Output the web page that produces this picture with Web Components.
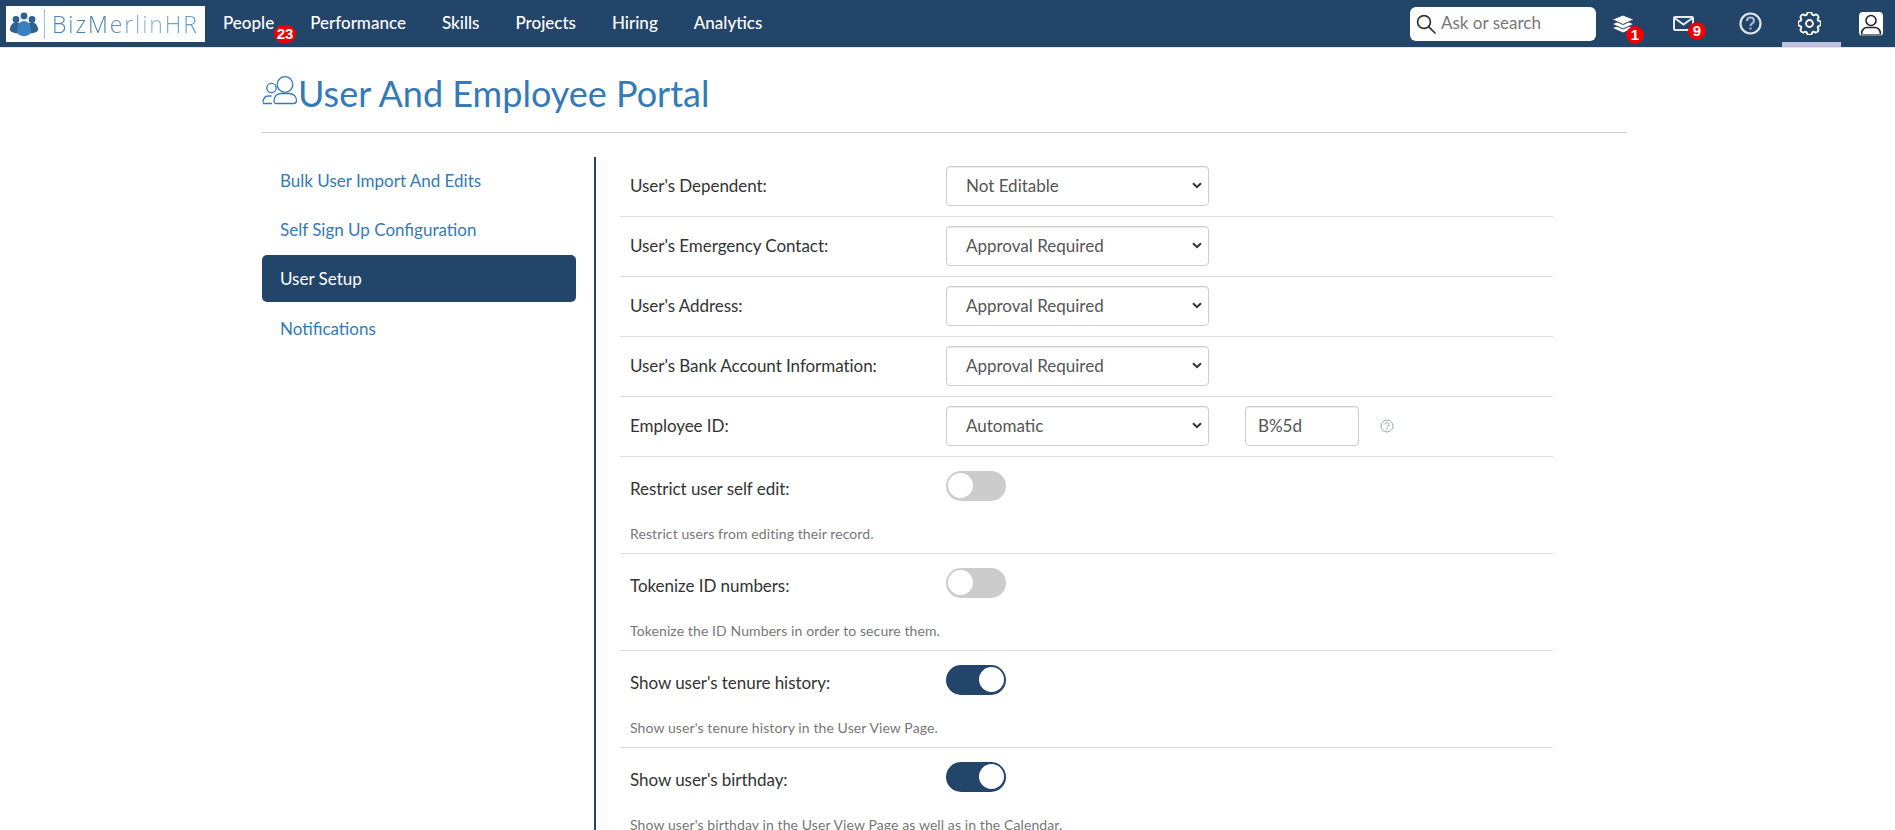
<!DOCTYPE html>
<html><head><meta charset="utf-8"><title>User And Employee Portal</title>
<style>
html,body{margin:0;padding:0;height:830px;overflow:hidden;background:#fff;font-family:Lato,"Liberation Sans",sans-serif;color:#333}
</style></head><body>
<app-header></app-header>
<portal-page>
  <page-title slot="title">User And Employee Portal</page-title>
  <side-nav slot="nav"></side-nav>
  <select-row label="User's Dependent:" value="Not Editable"></select-row>
  <select-row label="User's Emergency Contact:" value="Approval Required"></select-row>
  <select-row label="User's Address:" value="Approval Required"></select-row>
  <select-row label="User's Bank Account Information:" value="Approval Required"></select-row>
  <select-row label="Employee ID:" value="Automatic" extra="B%5d"></select-row>
  <toggle-row label="Restrict user self edit:" note="Restrict users from editing their record."></toggle-row>
  <toggle-row label="Tokenize ID numbers:" note="Tokenize the ID Numbers in order to secure them."></toggle-row>
  <toggle-row on label="Show user's tenure history:" note="Show user's tenure history in the User View Page."></toggle-row>
  <toggle-row on label="Show user's birthday:" note="Show user's birthday in the User View Page as well as in the Calendar."></toggle-row>
</portal-page>
<script>
const NAVY='#23456a';
function def(name,html,init){
  customElements.define(name,class extends HTMLElement{
    constructor(){super();this.attachShadow({mode:'open'}).innerHTML=html;}
    connectedCallback(){if(init)init(this,this.shadowRoot);}
  });
}
const gear='M9.796 1.343c-.527-1.79-3.065-1.79-3.592 0l-.094.319a.873.873 0 0 1-1.255.52l-.292-.16c-1.64-.892-3.433.902-2.54 2.541l.159.292a.873.873 0 0 1-.52 1.255l-.319.094c-1.79.527-1.79 3.065 0 3.592l.319.094a.873.873 0 0 1 .52 1.255l-.16.292c-.892 1.64.901 3.434 2.541 2.54l.292-.159a.873.873 0 0 1 1.255.52l.094.319c.527 1.79 3.065 1.79 3.592 0l.094-.319a.873.873 0 0 1 1.255-.52l.292.16c1.64.893 3.434-.902 2.54-2.541l-.159-.292a.873.873 0 0 1 .52-1.255l.319-.094c1.79-.527 1.79-3.065 0-3.592l-.319-.094a.873.873 0 0 1-.52-1.255l.16-.292c.893-1.64-.902-3.433-2.541-2.54l-.292.159a.873.873 0 0 1-1.255-.52l-.094-.319z';

def('red-badge',`<style>:host{position:absolute;display:flex;align-items:center;justify-content:center;background:#f00000;color:#fff;border-radius:9px;height:18px;min-width:18px;font:700 15px "Liberation Sans",Arial,sans-serif;padding:0 1px;box-sizing:border-box;line-height:18px}</style><slot></slot>`);

def('nav-link',`<style>:host{display:block;position:relative;color:#fff;font:500 17px Lato,sans-serif;line-height:45px;height:47px;white-space:nowrap}</style><slot></slot>`);

def('icon-cell',`<style>:host{display:flex;align-items:center;justify-content:center;position:relative;height:47px;box-sizing:border-box;flex:none}
:host([active])::after{content:"";position:absolute;left:0;right:0;bottom:0;height:5px;background:#c0c0e2}</style><slot></slot>`);

def('search-box',`<style>:host{display:flex;align-items:center;width:186px;height:34px;background:#fff;border-radius:6px;box-sizing:border-box;padding-left:6px;gap:5px;flex:none}
span{font:17px Lato,sans-serif;color:#777;white-space:nowrap;padding-bottom:3px}</style>
<svg width="20" height="20" viewBox="0 0 20 20" fill="none" stroke="#333" stroke-width="1.7"><circle cx="8" cy="8" r="6.4"/><path d="M12.8 12.8 19 19" stroke-linecap="round"/></svg><span>Ask or search</span>`);

def('app-header',`<style>
:host{display:flex;align-items:center;height:47px;background:${NAVY};box-shadow:0 1px 0 #e3e7ec}
.logo{display:flex;align-items:center;flex:none;width:199px;height:36px;margin-left:6px;background:#fff;box-sizing:border-box;padding-left:4px}
.word{font:300 23px "Open Sans",sans-serif;letter-spacing:1.9px;white-space:nowrap;background:linear-gradient(90deg,#4d86b5,#3f78aa 35%,#8fb3d1 62%,#5a94c4);-webkit-background-clip:text;background-clip:text;color:transparent}
.sep{width:1px;height:30px;background:#9cc0dc;margin:0 7px 0 6px;flex:none}
nav{display:flex;gap:36px;margin-left:18px}
.right{display:flex;align-items:center;margin-left:auto}
</style>
<div class="logo">
<svg width="28" height="24" viewBox="0 0 28 24" style="flex:none">
<g fill="#2e618f"><circle cx="6" cy="7.500" r="3.400"/><circle cx="22" cy="7.500" r="3.400"/><path d="M0 18c0-5 2.500-7.500 6-7.500 1.500 0 3 .4 4 1.500v9.500C5 21.500 0 20 0 18zM28 18c0-5-2.500-7.500-6-7.500-1.500 0-3 .4-4 1.500v9.500c5 0 10-1.500 10-3.500z"/><circle cx="14" cy="4" r="3.400"/></g>
<path d="M7 19c0-6 2.500-10 7-10s7 4 7 10c0 3-3 5-7 5s-7-2-7-5z" fill="#3b80c0"/></svg>
<span class="sep"></span><span class="word">BizMerlinHR</span></div>
<nav>
<nav-link>People<red-badge style="left:51px;top:25px;width:22px">23</red-badge></nav-link>
<nav-link>Performance</nav-link><nav-link>Skills</nav-link><nav-link>Projects</nav-link><nav-link>Hiring</nav-link><nav-link>Analytics</nav-link>
</nav>
<div class="right">
<search-box></search-box>
<icon-cell style="width:58px;padding-right:4px">
<svg width="24" height="20" viewBox="0 0 24 20" fill="#fff" stroke="${NAVY}" stroke-width="1"><path d="M12 9.500 23 14 12 19 1 14z"/><path d="M12 5.500 23 10 12 15 1 10z"/><path d="M12 1 23 5.500 12 10.500 1 5.500z"/></svg>
<red-badge style="left:30px;top:26px">1</red-badge></icon-cell>
<icon-cell style="width:59px">
<svg width="21" height="15" viewBox="0 0 21 15" fill="none" stroke="#e6ebf1" stroke-width="2"><rect x="1" y="1" width="19" height="13" rx="1"/><path d="M1.500 2 10.500 8.500 19.500 2"/></svg>
<red-badge style="left:34px;top:22px">9</red-badge></icon-cell>
<icon-cell style="width:69px;padding-left:5px">
<svg width="23" height="23" viewBox="0 0 23 23" fill="none" stroke="#dfe5ec" stroke-width="2.200"><circle cx="11.500" cy="11.500" r="10"/><path d="M8 9c0-2.300 1.600-3.500 3.500-3.500S15 6.800 15 8.700c0 2.800-3.500 2.700-3.500 5.300" stroke="#aab8c8" stroke-width="2.200"/><path d="M11.500 15.500v2" stroke="#aab8c8" stroke-width="2.200"/></svg></icon-cell>
<icon-cell active style="width:59px;padding-right:5px">
<svg width="23" height="23" viewBox="0 0 16 16" fill="none" stroke="#fff" stroke-width="1.300"><path d="${gear}"/><circle cx="8" cy="8" r="2.400"/></svg></icon-cell>
<icon-cell style="width:54px;padding-left:6px">
<svg width="24" height="24" viewBox="0 0 24 24"><rect width="24" height="24" rx="4" fill="#fff"/><g fill="none" stroke="#222" stroke-width="1.600"><circle cx="12" cy="8.500" r="5"/><path d="M2.500 22c0-4.500 3-6.500 5.500-6.500h8c2.500 0 5.500 2 5.500 6.500"/><path d="M2 23h20" stroke-width="1.200"/></g></svg></icon-cell>
</div>`);

def('page-title',`<style>:host{display:flex;align-items:center;height:84px;border-bottom:1px solid #ccc;color:#337ab7;font:400 36px Lato,sans-serif;padding-top:1px;white-space:nowrap}
h1{font:inherit;margin:6px 0 0}svg{flex:none;margin-top:-1px}</style>
<svg width="36" height="30" viewBox="0 0 36 30" fill="none" stroke="#337ab7" stroke-width="1.300"><circle cx="23" cy="9.500" r="7.800"/><path d="M12 27c0-6 3-8.500 7-8.500h8c4 0 7.500 2.500 7.500 7 0 2-1 3-3 3H14c-1.500 0-2-.5-2-1.500z"/><circle cx="9.500" cy="13" r="4.700"/><path d="M1 27.500c.2-4.500 2-6.500 5.500-6.500h3M1 28.500h9"/></svg><h1><slot></slot></h1>`);

def('side-link',`<style>:host{display:block;height:47px;padding-left:18px;border-radius:5px;color:#337ab7;font:400 17px/47px Lato,sans-serif;box-sizing:border-box;margin-bottom:2px}
:host([active]){background:${NAVY};color:#fff}:host([last]){line-height:49px}</style><slot></slot>`);

def('side-nav',`<style>:host{display:block}</style>
<side-link>Bulk User Import And Edits</side-link><side-link>Self Sign Up Configuration</side-link><side-link active>User Setup</side-link><side-link last>Notifications</side-link>`);

def('select-row',`<style>:host{display:flex;align-items:center;height:60px;box-sizing:border-box;border-bottom:1px solid #ddd;padding-left:10px;font:17px Lato,sans-serif;letter-spacing:-.05px;color:#333}
label{width:316px;flex:none;padding-bottom:3px}
.sel{position:relative;display:block;flex:none;width:263px;height:40px;margin-top:-1px}
select{appearance:none;-webkit-appearance:none;display:block;width:100%;height:40px;box-sizing:border-box;border:1px solid #ccc;border-radius:4px;background:#fff;color:#555;font:17px Lato,sans-serif;padding:3px 19px 5px;box-shadow:inset 0 1px 1px rgba(0,0,0,.075)}
.chev{position:absolute;right:7px;top:16px;pointer-events:none}
input{width:114px;height:40px;box-sizing:border-box;border:1px solid #ccc;border-radius:4px;color:#555;font:17px Lato,sans-serif;padding:3px 12px 5px;margin:-1px 0 0 36px;box-shadow:inset 0 1px 1px rgba(0,0,0,.075)}
.help{margin-left:21px;margin-top:-1px}</style>
<label></label><span class="sel"><select></select><svg class="chev" width="10" height="7" viewBox="0 0 10 7" fill="none" stroke="#333" stroke-width="2"><path d="M1 1.200 5 5.200 9 1.200"/></svg></span><span id="x" style="display:contents"></span>`,
(el,s)=>{s.querySelector('label').textContent=el.getAttribute('label');
 const sel=s.querySelector('select');if(!sel.options.length){const o=document.createElement('option');o.textContent=el.getAttribute('value');sel.append(o);}
 if(el.hasAttribute('extra')){s.getElementById('x').innerHTML=`<input value="${el.getAttribute('extra')}"><svg class="help" width="14" height="14" viewBox="0 0 14 14" fill="none" stroke="#8fa3c4"><circle cx="7" cy="7" r="6"/><path d="M5 5.500C5 4.300 6 3.700 7 3.700s2 .7 2 1.800c0 1.500-2 1.500-2 3M7 9.500v1.200" stroke="#999"/></svg>`}
});

def('toggle-switch',`<style>:host{display:block;position:relative;width:60px;height:30px;border-radius:15px;background:#ccc;flex:none}
:host([on]){background:${NAVY}}
i{position:absolute;top:2px;left:2px;width:25px;height:25px;border-radius:50%;background:#fff}
:host([on]) i{left:33px}</style><i></i>`);

def('toggle-row',`<style>:host{display:block;height:97px;box-sizing:border-box;border-bottom:1px solid #ddd;padding:14px 0 0 10px;font:17px Lato,sans-serif;letter-spacing:-.05px;color:#333}
.top{display:flex;align-items:center;height:30px}
label{width:316px;flex:none;padding-top:5px}
.note{margin-top:23px;font-size:14px;letter-spacing:.1px;line-height:19px;color:#777;white-space:nowrap}</style>
<div class="top"><label></label><toggle-switch></toggle-switch></div><div class="note"></div>`,
(el,s)=>{s.querySelector('label').textContent=el.getAttribute('label');s.querySelector('.note').textContent=el.getAttribute('note');
 if(el.hasAttribute('on'))s.querySelector('toggle-switch').setAttribute('on','');});

def('portal-page',`<style>:host{display:block;width:1365px;margin:0 0 0 262px}
.cols{display:flex;margin-top:24px}
.nav{width:314px;flex:none}
.main{margin-left:18px;border-left:2px solid ${NAVY};padding:0 0 0 24px;width:933px;height:700px}
</style><slot name="title"></slot><div class="cols"><div class="nav"><slot name="nav"></slot></div><div class="main"><slot></slot></div></div>`);
</script>
</body></html>
